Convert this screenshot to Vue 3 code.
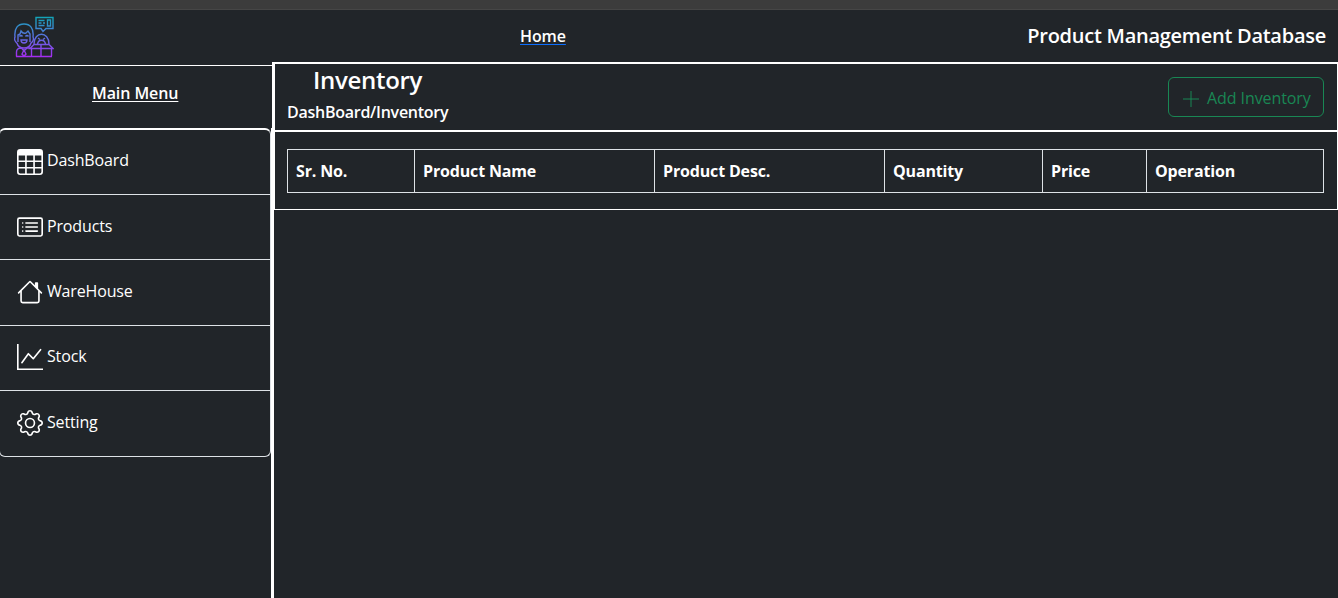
<script setup>
const menu = [
  { label: 'DashBoard', icon: 'table' },
  { label: 'Products', icon: 'list' },
  { label: 'WareHouse', icon: 'house' },
  { label: 'Stock', icon: 'graph' },
  { label: 'Setting', icon: 'gear' },
]
const columns = ['Sr. No.', 'Product Name', 'Product Desc.', 'Quantity', 'Price', 'Operation']
</script>

<template>
  <div class="app">
    <div class="strip"></div>
    <header class="header">
      <svg class="logo" viewBox="0 0 40 42" fill="none" stroke="url(#lg)" stroke-width="1.4">
        <defs>
          <linearGradient id="lg" gradientUnits="userSpaceOnUse" x1="0" y1="1" x2="0" y2="41">
            <stop offset="0" stop-color="#12a5b8" />
            <stop offset=".5" stop-color="#5b70e0" />
            <stop offset="1" stop-color="#a52cf0" />
          </linearGradient>
        </defs>
        <path d="M22 1.500h17v11h-7l-3 3-2-3h-5zM24.500 4.500h6M24.500 7h3M29 7h2M24.500 9.500h6M33.500 4h3v6h-3z" />
        <path d="M3 27c-2-1-3-4-2-6-1-9 3-13 9-13s10 4 9 13c1 2 0 5-2 6-1 4-3 5-7 5s-6-1-7-5M4 26v-7l2-1 1-3q2 3 5 2l2-2 2 3v8" />
        <path d="M5.500 20.500q1.500-2 3 0M11.500 20.500q1.500-2 3 0M7 24h6q0 3-3 3t-3-3z" />
        <path d="M2.500 40.500V36q0-4 5-4l2.500 3 3-3h4M10 34l-2 4 2 2 2-2zM2 40.500h36M17.500 32.500V40M27 29v11M37.500 32.500V40M20 28.500h15l4 4H16zM20 28c0-13 15-13 15 0M23.500 28c1-5 7-5 8 0M24 22l2 1.500M31 22l-2 1.500" />
      </svg>
      <a class="home">Home</a>
      <div class="brand">Product Management Database</div>
    </header>
    <div class="body">
      <aside class="sidebar">
        <div class="menu-head"><div class="menu-title"><span>Main Menu</span></div></div>
        <ul class="menu">
          <li v-for="item in menu" :key="item.label">
            <svg class="icon" viewBox="0 0 16 16" fill="currentColor">
              <path v-if="item.icon === 'table'" d="M0 2a2 2 0 0 1 2-2h12a2 2 0 0 1 2 2v12a2 2 0 0 1-2 2H2a2 2 0 0 1-2-2zm15 2h-4v3h4zm0 4h-4v3h4zm0 4h-4v3h3a1 1 0 0 0 1-1zm-5 3v-3H6v3zm-5 0v-3H1v2a1 1 0 0 0 1 1zm-4-4h4V8H1zm0-4h4V4H1zm5-3v3h4V4zm4 4H6v3h4z" />
              <path v-else-if="item.icon === 'list'" d="M14.500 3a.5.5 0 0 1 .5.5v9a.5.5 0 0 1-.5.5h-13a.5.5 0 0 1-.5-.5v-9a.5.5 0 0 1 .5-.5zm-13-1A1.500 1.500 0 0 0 0 3.500v9A1.500 1.500 0 0 0 1.500 14h13a1.500 1.500 0 0 0 1.500-1.500v-9A1.500 1.500 0 0 0 14.500 2zM5 8a.5.5 0 0 1 .5-.5h7a.5.5 0 0 1 0 1h-7A.5.5 0 0 1 5 8m0-2.500a.5.5 0 0 1 .5-.5h7a.5.5 0 0 1 0 1h-7a.5.5 0 0 1-.5-.5m0 5a.5.5 0 0 1 .5-.5h7a.5.5 0 0 1 0 1h-7a.5.5 0 0 1-.5-.5m-1-5a.5.5 0 1 1-1 0 .5.5 0 0 1 1 0M4 8a.5.5 0 1 1-1 0 .5.5 0 0 1 1 0m0 2.500a.5.5 0 1 1-1 0 .5.5 0 0 1 1 0" />
              <path v-else-if="item.icon === 'house'" d="M8.707 1.500a1 1 0 0 0-1.414 0L.646 8.146a.5.5 0 0 0 .708.708L2 8.207V13.500A1.500 1.500 0 0 0 3.500 15h9a1.500 1.500 0 0 0 1.500-1.500V8.207l.646.647a.5.5 0 0 0 .708-.708L13 5.793V2.500a.5.5 0 0 0-.5-.5h-1a.5.5 0 0 0-.5.5v1.293zM13 7.207V13.500a.5.5 0 0 1-.5.5h-9a.5.5 0 0 1-.5-.5V7.207l5-5z" />
              <path v-else-if="item.icon === 'graph'" fill-rule="evenodd" d="M0 0h1v15h15v1H0zm14.817 3.113a.5.5 0 0 1 .07.704l-4.500 5.500a.5.5 0 0 1-.74.037L7.060 6.767l-3.656 5.027a.5.5 0 0 1-.808-.588l4-5.500a.5.5 0 0 1 .758-.06l2.609 2.610 4.150-5.073a.5.5 0 0 1 .704-.07" />
              <g v-else>
                <path d="M8 4.754a3.246 3.246 0 1 0 0 6.492 3.246 3.246 0 0 0 0-6.492M5.754 8a2.246 2.246 0 1 1 4.492 0 2.246 2.246 0 0 1-4.492 0" />
                <path d="M9.796 1.343c-.527-1.790-3.065-1.790-3.592 0l-.094.319a.873.873 0 0 1-1.255.52l-.292-.16c-1.640-.892-3.433.902-2.540 2.541l.159.292a.873.873 0 0 1-.52 1.255l-.319.094c-1.790.527-1.790 3.065 0 3.592l.319.094a.873.873 0 0 1 .52 1.255l-.16.292c-.892 1.640.901 3.434 2.541 2.540l.292-.159a.873.873 0 0 1 1.255.52l.094.319c.527 1.790 3.065 1.790 3.592 0l.094-.319a.873.873 0 0 1 1.255-.52l.292.16c1.640.893 3.434-.902 2.540-2.541l-.159-.292a.873.873 0 0 1 .52-1.255l.319-.094c1.790-.527 1.790-3.065 0-3.592l-.319-.094a.873.873 0 0 1-.52-1.255l.16-.292c.893-1.640-.902-3.433-2.541-2.540l-.292.159a.873.873 0 0 1-1.255-.52zm-2.633.283c.246-.835 1.428-.835 1.674 0l.094.319a1.873 1.873 0 0 0 2.693 1.115l.291-.16c.764-.415 1.600.42 1.184 1.185l-.159.292a1.873 1.873 0 0 0 1.116 2.692l.318.094c.835.246.835 1.428 0 1.674l-.319.094a1.873 1.873 0 0 0-1.115 2.693l.16.291c.415.764-.42 1.600-1.185 1.184l-.291-.159a1.873 1.873 0 0 0-2.693 1.116l-.094.318c-.246.835-1.428.835-1.674 0l-.094-.319a1.873 1.873 0 0 0-2.692-1.115l-.292.16c-.764.415-1.600-.42-1.184-1.185l.159-.291A1.873 1.873 0 0 0 1.945 8.930l-.319-.094c-.835-.246-.835-1.428 0-1.674l.319-.094A1.873 1.873 0 0 0 3.060 4.377l-.16-.292c-.415-.764.42-1.600 1.185-1.184l.292.159a1.873 1.873 0 0 0 2.692-1.115z" />
              </g>
            </svg>
            <span>{{ item.label }}</span>
          </li>
        </ul>
      </aside>
      <main class="main">
        <section class="title-bar">
          <div>
            <h1><span>Inventory</span></h1>
            <p><span>DashBoard/Inventory</span></p>
          </div>
          <button class="add">
            <svg viewBox="0 0 16 16" stroke="currentColor" stroke-width="1"><path d="M0 8h16M8 0v16" /></svg>
            <span>Add Inventory</span>
          </button>
        </section>
        <section class="table-box">
          <table>
            <thead><tr><th v-for="(c, i) in columns" :key="c" :class="'c' + i">{{ c }}</th></tr></thead>
          </table>
        </section>
      </main>
    </div>
  </div>
</template>

<style>
body { margin: 0; background: #212529; overflow: hidden; }
</style>

<style scoped>
* { box-sizing: border-box; }
.app { height: 598px; display: flex; flex-direction: column; background: #212529; color: #fff; font-family: "Open Sans", "Noto Sans", sans-serif; font-size: 16px; }
.strip { flex: none; height: 10px; background: #3c3c3c; border-bottom: 1px solid #464646; }
.header { flex: none; height: 52px; display: grid; grid-template-columns: 520px 1fr auto; align-items: center; padding-right: 12px; }
.logo { width: 40px; height: 42px; margin: 1px 0 0 14px; }
.home { font-weight: 600; letter-spacing: -.1px; text-decoration: underline #0d6efd 1px; text-underline-offset: 2px; justify-self: start; }
.brand { font-size: 20px; font-weight: 600; letter-spacing: -.26px; white-space: nowrap; margin-top: -2px; }
.body { flex: 1; display: flex; min-height: 0; }
.sidebar { width: 271px; }
.menu-head { position: relative; z-index: 1; width: 272px; height: 66px; padding-top: 3px; background: #212529; }
.menu-title { height: 63px; border-top: 1px solid #fff; padding: 15px 0 0 92px; line-height: 24px; font-weight: 600; letter-spacing: -.08px; }
.menu-title span { text-decoration: underline 1px; text-underline-offset: 2px; }
.menu { list-style: none; margin: 0 0 0 -1px; padding: 0; border: 1px solid #dee2e6; border-top: 2px solid #fff; border-radius: 6px; }
.menu li { height: 65.2px; display: flex; padding: 18.8px 0 0 17px; border-bottom: 1px solid #dee2e6; line-height: 24px; }
.menu li:last-child { border-bottom: 0; padding-top: 19.3px; }
.icon { width: 26px; height: 26px; margin-right: 4px; }
.menu span { margin-top: -.4px; letter-spacing: -.15px; }
.main { flex: 1; border-left: 3px solid #fff; }
.title-bar { height: 70px; display: flex; justify-content: space-between; border: 2px solid #fff; border-left-width: 1px; border-right-width: 1px; padding: 0 13px 0 12px; }
h1 { font-size: 24px; line-height: 29px; font-weight: 600; margin: 1px 0 0 26px; letter-spacing: -.3px; }
p { margin: 6px 0 0; line-height: 24px; font-weight: 600; letter-spacing: -.26px; }
.add { width: 156px; height: 40px; margin-top: 13px; padding: 0 0 0 14px; display: flex; align-items: center; gap: 8px; color: #198754; background: none; border: 1px solid #198754; border-radius: 6px; font: inherit; letter-spacing: -.08px; white-space: nowrap; }
.add svg { width: 16px; height: 16px; margin-top: 3px; }
.add span { margin-top: 2px; }
.table-box { height: 78px; border: solid #fff; border-width: 0 1px 1px; padding: 17px 13px 0 12px; }
table { width: 1037px; height: 44px; table-layout: fixed; border-collapse: collapse; }
th { border: 1px solid #dee2e6; padding: 0 8px; text-align: left; font-weight: 700; letter-spacing: -.16px; }
.c0 { width: 127px; }
.c1 { width: 240px; }
.c2 { width: 230px; }
.c3 { width: 158px; }
.c4 { width: 104px; }
.c5 { width: 177px; }
</style>
